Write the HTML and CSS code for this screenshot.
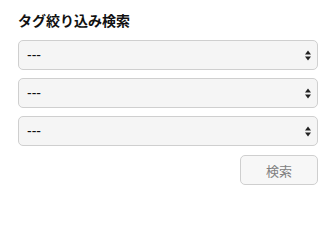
FILE: index.html
```html
<!DOCTYPE html>
<html lang="ja">
<head>
<meta charset="utf-8">
<link rel="stylesheet" href="styles.css">
</head>
<body>
<form class="panel">
  <h3 class="title">タグ絞り込み検索</h3>
  <div class="fields">
    <label class="select-wrap">
      <select class="select"><option>---</option></select>
      <svg class="arrows" width="6" height="11" viewBox="0 0 6 11"><path d="M3 0.5 L6 4.5 L0 4.5 Z M0 6.5 L6 6.5 L3 10.5 Z" fill="#222"/></svg>
    </label>
    <label class="select-wrap">
      <select class="select"><option>---</option></select>
      <svg class="arrows" width="6" height="11" viewBox="0 0 6 11"><path d="M3 0.5 L6 4.5 L0 4.5 Z M0 6.5 L6 6.5 L3 10.5 Z" fill="#222"/></svg>
    </label>
    <label class="select-wrap">
      <select class="select"><option>---</option></select>
      <svg class="arrows" width="6" height="11" viewBox="0 0 6 11"><path d="M3 0.5 L6 4.5 L0 4.5 Z M0 6.5 L6 6.5 L3 10.5 Z" fill="#222"/></svg>
    </label>
  </div>
  <div class="actions">
    <button type="button" class="btn">検索</button>
  </div>
</form>
</body>
</html>
```
FILE: styles.css
```css
html, body {
  margin: 0;
  padding: 0;
  background: #fff;
}
body {
  font-family: "Liberation Sans", "Noto Sans CJK JP", sans-serif;
  color: #111;
}
.panel {
  width: 300px;
  padding: 12px 0 0 18px;
}
.title {
  margin: 0 0 10px 0;
  font-size: 14px;
  line-height: 18px;
  font-weight: bold;
  color: #111;
}
.fields {
  display: flex;
  flex-direction: column;
  gap: 8px;
}
.select-wrap {
  position: relative;
  display: block;
  height: 30px;
}
.select {
  appearance: none;
  -webkit-appearance: none;
  display: block;
  width: 100%;
  height: 30px;
  box-sizing: border-box;
  margin: 0;
  padding: 0 20px 0 8px;
  border: 1px solid #cfcfcf;
  border-radius: 5px;
  background: #f5f5f5;
  font-family: "Liberation Sans", sans-serif;
  font-size: 14px;
  color: #111;
}
.arrows {
  position: absolute;
  right: 7px;
  top: 10px;
  pointer-events: none;
}
.actions {
  display: flex;
  justify-content: flex-end;
  margin-top: 9px;
}
.btn {
  width: 78px;
  height: 30px;
  box-sizing: border-box;
  margin: 0;
  padding: 0;
  border: 1px solid #cfcfcf;
  border-radius: 5px;
  background: #f7f7f7;
  font-family: "Noto Sans CJK JP", sans-serif;
  font-size: 13px;
  color: #808080;
}
```
